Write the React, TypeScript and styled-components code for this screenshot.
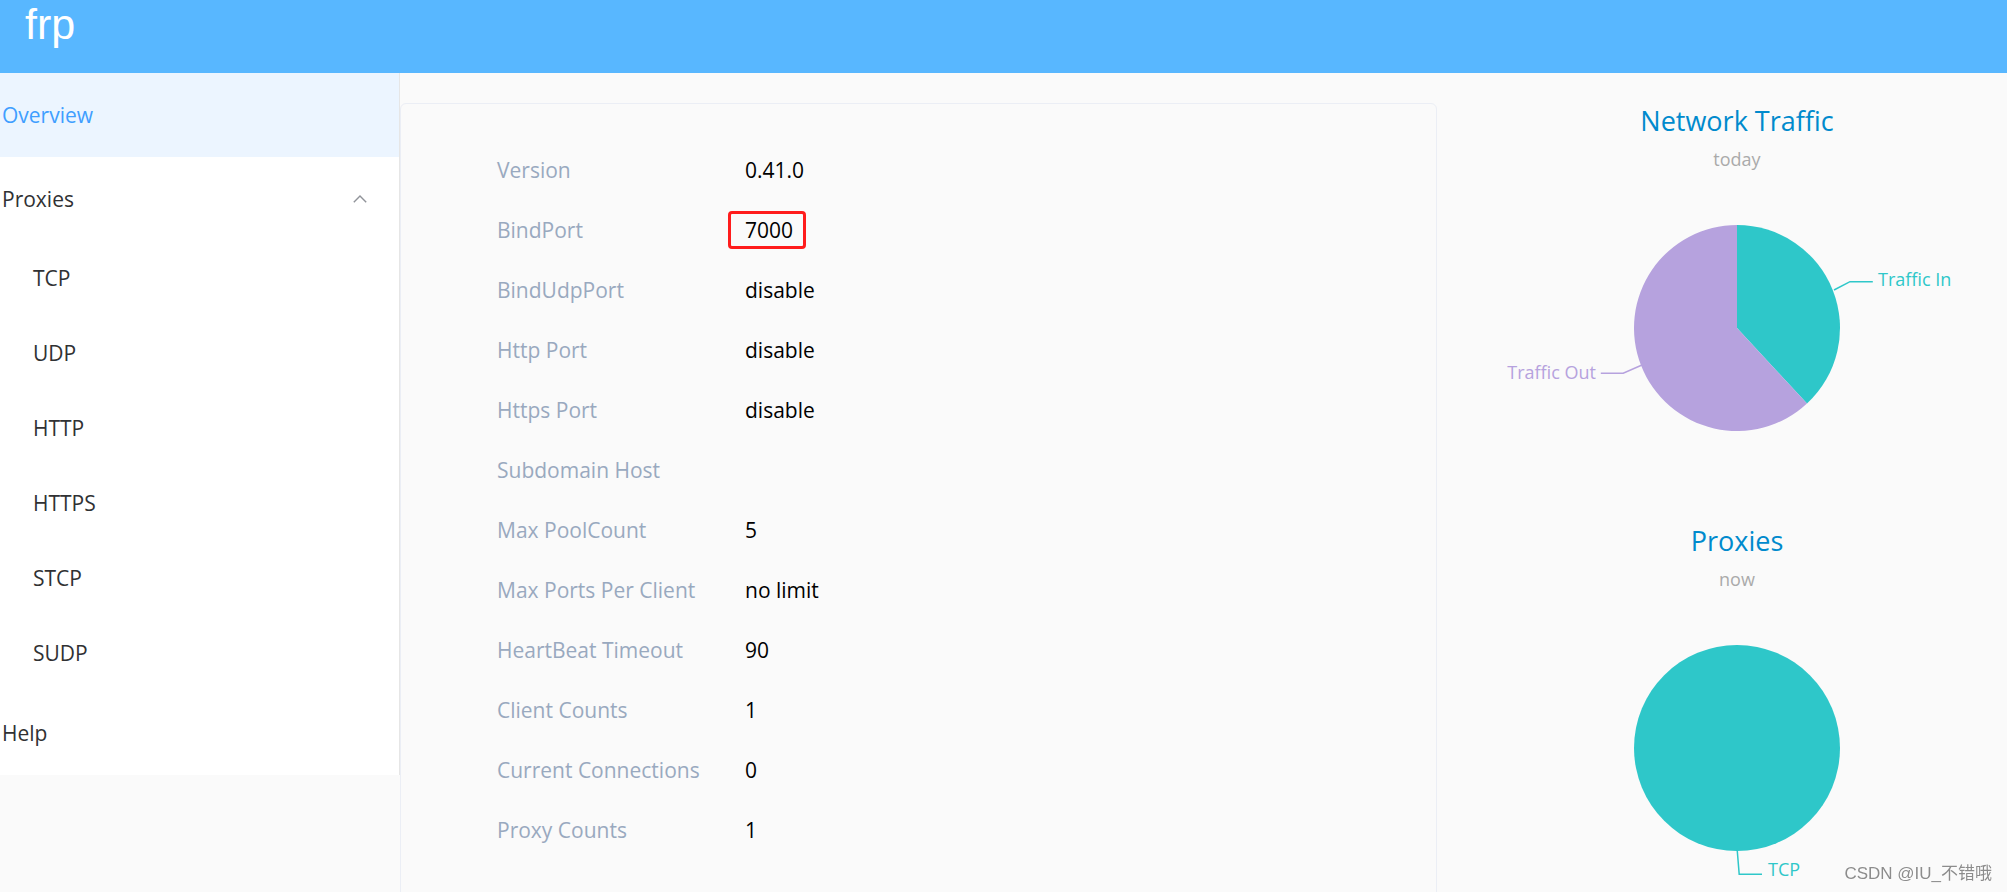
import React from "react";
import styled, { createGlobalStyle } from "styled-components";

const GlobalStyle = createGlobalStyle`
  html, body {
    margin: 0;
    padding: 0;
    background: #fafafa;
    font-family: "Open Sans", "Noto Sans", "Noto Sans CJK SC", sans-serif;
  }
  * { box-sizing: border-box; }
`;

const Page = styled.div`
  min-height: 100vh;
  background: #fafafa;
`;

const Header = styled.header`
  height: 73px;
  background: #58b7ff;
  display: flex;
  align-items: flex-start;
`;

const Logo = styled.span`
  margin-left: 25px;
  color: #ffffff;
  font-family: "Liberation Sans", "Open Sans", sans-serif;
  font-size: 43px;
  line-height: 49px;
`;

const Body = styled.div`
  display: flex;
  align-items: flex-start;
`;

const Sidebar = styled.nav`
  width: 400px;
  flex: none;
  background: #ffffff;
  border-right: 1px solid #e6e6e6;
`;

const MenuItem = styled.div<{ $active?: boolean }>`
  height: 84px;
  line-height: 84px;
  padding-left: 2px;
  font-size: 21px;
  color: ${(p) => (p.$active ? "#409eff" : "#303133")};
  background: ${(p) => (p.$active ? "#ecf5ff" : "transparent")};
`;

const SubmenuTitle = styled.div`
  height: 84px;
  display: flex;
  align-items: center;
  justify-content: space-between;
  padding-left: 2px;
  padding-right: 32px;
  font-size: 21px;
  color: #303133;
`;

const SubItem = styled.div`
  height: 75px;
  line-height: 75px;
  padding-left: 33px;
  font-size: 21px;
  color: #303133;
`;

const Main = styled.main`
  display: flex;
  align-items: flex-start;
`;

const Card = styled.section`
  width: 1037px;
  flex: none;
  margin-top: 30px;
  border: 1px solid #ebeef5;
  border-radius: 6px;
  background: #fafafa;
  padding: 36px 0 60px 96px;
`;

const Row = styled.div`
  height: 60px;
  display: flex;
  align-items: center;
  font-size: 21px;
`;

const Label = styled.span`
  width: 248px;
  flex: none;
  color: #99a9bf;
`;

const Value = styled.span`
  color: #000000;
`;

const Highlight = styled.span`
  display: inline-block;
  margin-left: -17px;
  padding: 0 10px 0 14px;
  line-height: 32px;
  border: 3px solid #ff1c1c;
  border-radius: 4px;
`;

const Charts = styled.aside`
  width: 540px;
  flex: none;
  margin-left: 30px;
  padding-top: 28px;
`;

const ChartBlock = styled.div`
  display: flex;
  flex-direction: column;
  align-items: center;
`;

const ChartTitle = styled.div`
  margin-top: 2px;
  font-size: 27px;
  line-height: 36px;
  color: #008acd;
`;

const ChartSub = styled.div`
  margin-top: 8px;
  font-size: 18px;
  line-height: 24px;
  color: #aaaaaa;
`;

const PieSvg = styled.svg`
  display: block;
  overflow: visible;
  font-family: "Open Sans", "Noto Sans", sans-serif;
`;

const Watermark = styled.div`
  position: fixed;
  right: 15px;
  bottom: 6px;
  font-family: "Liberation Sans", "Noto Sans CJK SC", sans-serif;
  font-size: 17px;
  line-height: 24px;
  color: #8c8c8c;
  text-shadow: 0 0 2px #ffffff;
`;

const Chevron = () => (
  <svg width="14" height="8" viewBox="0 0 14 8">
    <polyline points="0.8,7.2 7,1 13.2,7.2" fill="none" stroke="#909399" strokeWidth="1.4" />
  </svg>
);

const rows: [string, string][] = [
  ["Version", "0.41.0"],
  ["BindPort", "7000"],
  ["BindUdpPort", "disable"],
  ["Http Port", "disable"],
  ["Https Port", "disable"],
  ["Subdomain Host", ""],
  ["Max PoolCount", "5"],
  ["Max Ports Per Client", "no limit"],
  ["HeartBeat Timeout", "90"],
  ["Client Counts", "1"],
  ["Current Connections", "0"],
  ["Proxy Counts", "1"],
];

const CX = 270;
const CY = 157;
const R = 103;

function arcPoint(deg: number) {
  const a = (deg * Math.PI) / 180;
  return [CX + R * Math.sin(a), CY - R * Math.cos(a)];
}

const TrafficPie = () => {
  const inDeg = 137.2;
  const [ex, ey] = arcPoint(inDeg);
  return (
    <PieSvg width="540" height="350" viewBox="0 0 540 350">
      <path d={`M${CX},${CY} L${CX},${CY - R} A${R},${R} 0 0 1 ${ex},${ey} Z`} fill="#2ec7c9" />
      <path d={`M${CX},${CY} L${ex},${ey} A${R},${R} 0 1 1 ${CX},${CY - R} Z`} fill="#b6a2de" />
      <polyline points="367,119 383,110.7 405.8,110.7" fill="none" stroke="#2ec7c9" strokeWidth="1.5" />
      <text x="411" y="110.5" fontSize="18" fill="#2ec7c9" dominantBaseline="middle">
        Traffic In
      </text>
      <polyline points="175,194 156.2,202.3 133.8,202.3" fill="none" stroke="#b6a2de" strokeWidth="1.5" />
      <text x="129" y="203" fontSize="18" fill="#b6a2de" textAnchor="end" dominantBaseline="middle">
        Traffic Out
      </text>
    </PieSvg>
  );
};

const ProxyPie = () => (
  <PieSvg width="540" height="350" viewBox="0 0 540 350">
    <circle cx={CX} cy={CY} r={R} fill="#2ec7c9" />
    <polyline points="270.2,259 272.2,283.3 295,283.3" fill="none" stroke="#2ec7c9" strokeWidth="1.5" />
    <text x="301" y="280" fontSize="18" fill="#2ec7c9" dominantBaseline="middle">
      TCP
    </text>
  </PieSvg>
);

export default function App() {
  return (
    <Page>
      <GlobalStyle />
      <Header>
        <Logo>frp</Logo>
      </Header>
      <Body>
        <Sidebar>
          <MenuItem $active>Overview</MenuItem>
          <SubmenuTitle>
            <span>Proxies</span>
            <Chevron />
          </SubmenuTitle>
          {["TCP", "UDP", "HTTP", "HTTPS", "STCP", "SUDP"].map((t) => (
            <SubItem key={t}>{t}</SubItem>
          ))}
          <MenuItem>Help</MenuItem>
        </Sidebar>
        <Main>
          <Card>
            {rows.map(([k, v]) => (
              <Row key={k}>
                <Label>{k}</Label>
                <Value>{k === "BindPort" ? <Highlight>{v}</Highlight> : v}</Value>
              </Row>
            ))}
          </Card>
          <Charts>
            <ChartBlock>
              <ChartTitle>Network Traffic</ChartTitle>
              <ChartSub>today</ChartSub>
              <TrafficPie />
            </ChartBlock>
            <ChartBlock>
              <ChartTitle>Proxies</ChartTitle>
              <ChartSub>now</ChartSub>
              <ProxyPie />
            </ChartBlock>
          </Charts>
        </Main>
      </Body>
      <Watermark>CSDN @IU_不错哦</Watermark>
    </Page>
  );
}
